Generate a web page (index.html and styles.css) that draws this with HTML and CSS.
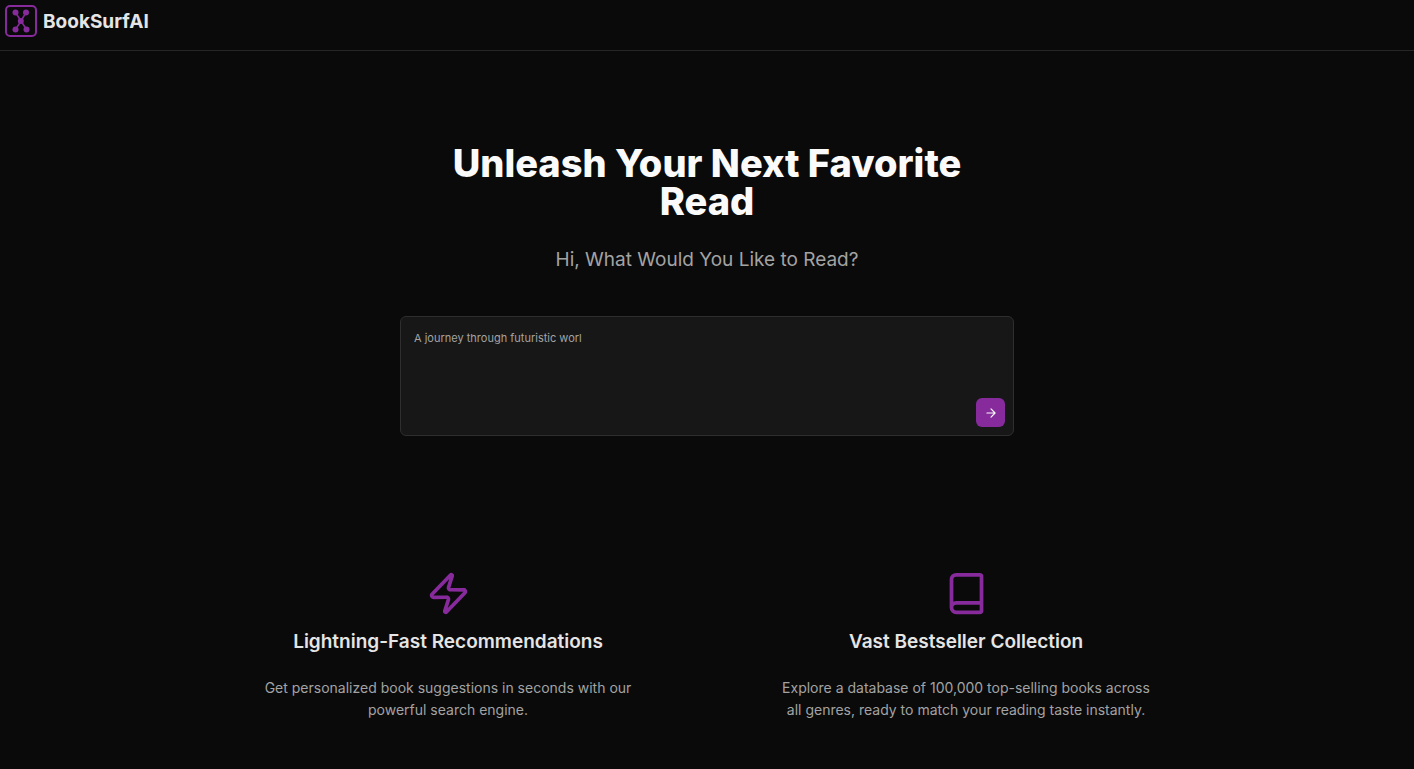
FILE: index.html
```html
<!DOCTYPE html>
<html lang="en">
<head>
  <meta charset="UTF-8" />
  <meta name="viewport" content="width=device-width, initial-scale=1.0" />
  <title>BookSurfAI</title>
  <link rel="stylesheet" href="styles.css">
</head>
<body>
  <header class="navbar">
    <a class="brand" href="#">
      <svg class="logo" viewBox="0 0 32 32" aria-hidden="true">
        <rect x="1" y="1" width="30" height="30" rx="4" fill="none" stroke="currentColor" stroke-width="2" />
        <path d="M10.5 7.5 16 16 21 7.5M10.5 24.5 16 16 21.5 24.5" fill="none" stroke="currentColor" stroke-width="1.5" />
        <g fill="currentColor">
          <circle cx="10.5" cy="7.5" r="3" />
          <circle cx="21" cy="7.5" r="3" />
          <circle cx="15.8" cy="16" r="3" />
          <circle cx="10.5" cy="24.5" r="3" />
          <circle cx="21.5" cy="24.5" r="3" />
        </g>
      </svg>
      <span>BookSurfAI</span>
    </a>
  </header>

  <main>
    <section class="hero">
      <h1>Unleash Your Next Favorite Read</h1>
      <p class="subtitle">Hi, What Would You Like to Read?</p>
      <form class="search">
        <textarea class="prompt" aria-label="What would you like to read?" placeholder="A journey through futuristic worl"></textarea>
        <button class="submit" type="button" aria-label="Search">
          <svg class="arrow" viewBox="0 0 24 24" aria-hidden="true">
            <path d="M5 12h14M12 5l7 7-7 7" />
          </svg>
        </button>
      </form>
    </section>

    <section class="features">
      <div class="feature">
        <svg class="feature-icon" viewBox="0 0 24 24" aria-hidden="true">
          <path d="M4 14a1 1 0 0 1-.78-1.63l9.9-10.2a.5.5 0 0 1 .86.46l-1.92 6.02A1 1 0 0 0 13 10h7a1 1 0 0 1 .78 1.63l-9.9 10.2a.5.5 0 0 1-.86-.46l1.92-6.02A1 1 0 0 0 11 14z" />
        </svg>
        <h2>Lightning-Fast Recommendations</h2>
        <p>Get personalized book suggestions in seconds with our powerful search engine.</p>
      </div>
      <div class="feature">
        <svg class="feature-icon" viewBox="0 0 24 24" aria-hidden="true">
          <path d="M4 19.5v-15A2.5 2.5 0 0 1 6.5 2H19a1 1 0 0 1 1 1v18a1 1 0 0 1-1 1H6.5a1 1 0 0 1 0-5H20" />
        </svg>
        <h2>Vast Bestseller Collection</h2>
        <p>Explore a database of 100,000 top-selling books across all genres, ready to match your reading taste instantly.</p>
      </div>
    </section>
  </main>
</body>
</html>
```
FILE: styles.css
```css
* {
  box-sizing: border-box;
}

body {
  margin: 0;
  background-color: #0a0a0a;
  color: #e5e5e5;
  font-family: Inter, sans-serif;
}

h1,
h2,
p {
  margin: 0;
}

.navbar {
  padding: 5px 5px 13px;
  border-bottom: 1px solid #262626;
}

.brand {
  display: flex;
  align-items: center;
  gap: 6px;
  color: #e5e5e5;
  font-size: 19px;
  font-weight: 700;
  text-decoration: none;
}

.logo {
  width: 32px;
  height: 32px;
  color: #862a9c;
}

.hero {
  display: flex;
  flex-direction: column;
  align-items: center;
  max-width: 614px;
  margin: 0 auto;
  padding-top: 93px;
  text-align: center;
}

.hero h1 {
  max-width: 580px;
  color: #fafafa;
  font-size: 38px;
  line-height: 38px;
  font-weight: 800;
}

.subtitle {
  margin-top: 26px;
  color: #a3a3a3;
  font-size: 19px;
  line-height: 28px;
}

.search {
  position: relative;
  width: 100%;
  margin-top: 42px;
}

.prompt {
  display: block;
  width: 100%;
  height: 120px;
  padding: 13px;
  border: 1px solid #2e2e2e;
  border-radius: 6px;
  background-color: #171717;
  color: #e5e5e5;
  font-family: inherit;
  font-size: 11px;
  line-height: 16px;
  resize: none;
}

.prompt::placeholder {
  color: #a3a3a3;
}

.submit {
  position: absolute;
  right: 9px;
  bottom: 9px;
  display: flex;
  align-items: center;
  justify-content: center;
  width: 29px;
  height: 29px;
  padding: 0;
  border: none;
  border-radius: 6px;
  background-color: #862a9c;
  color: #fafafa;
  cursor: pointer;
}

.arrow {
  width: 14px;
  height: 14px;
  fill: none;
  stroke: currentColor;
  stroke-width: 2;
  stroke-linecap: round;
  stroke-linejoin: round;
}

.features {
  display: grid;
  grid-template-columns: 1fr 1fr;
  gap: 38px;
  max-width: 998px;
  margin: 0 auto;
  padding: 135px 0 48px;
}

.feature {
  display: flex;
  flex-direction: column;
  align-items: center;
  padding: 0 50px;
  text-align: center;
}

.feature-icon {
  width: 45px;
  height: 45px;
  color: #862a9c;
  fill: none;
  stroke: currentColor;
  stroke-width: 2;
  stroke-linecap: round;
  stroke-linejoin: round;
}

.feature h2 {
  margin-top: 13px;
  font-size: 19px;
  line-height: 26px;
  font-weight: 600;
}

.feature p {
  margin-top: 22px;
  color: #a3a3a3;
  font-size: 14px;
  line-height: 22px;
}

@media (max-width: 700px) {
  .hero {
    padding: 48px 16px 0;
  }

  .features {
    grid-template-columns: 1fr;
    padding-top: 64px;
  }
}
```
